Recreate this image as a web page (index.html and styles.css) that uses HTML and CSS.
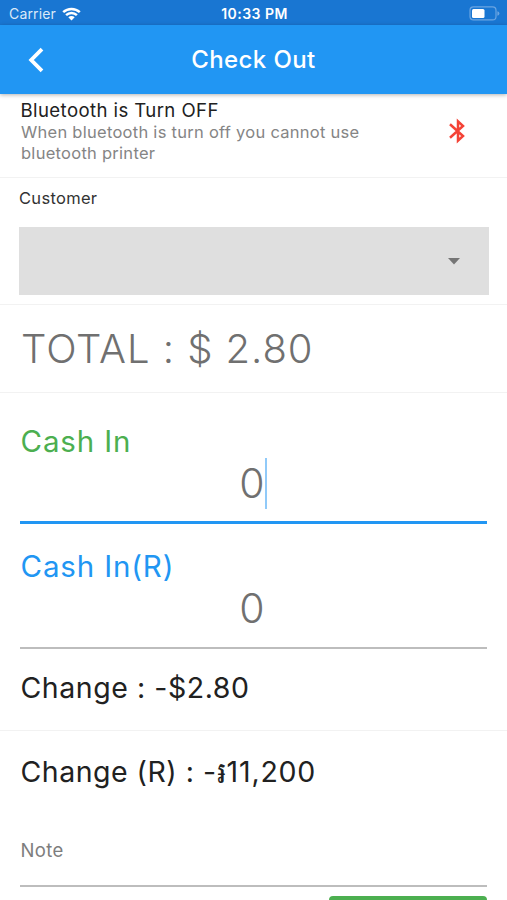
FILE: index.html
```html
<!DOCTYPE html>
<html lang="en">
<head>
<meta charset="utf-8">
<title>Check Out</title>
<link rel="stylesheet" href="styles.css">
</head>
<body>
<div class="status">
  <div class="carrier"><span class="carrier-name">Carrier</span>
    <svg class="wifi" width="19" height="14" viewBox="0 0 19 14" fill="none" stroke="#fff" stroke-width="2.5"><path d="M1.2 5.1C5.8.8 13.2.8 17.8 5.1M4.1 8.2c3-2.9 7.8-2.9 10.8 0"/><path d="M6.3 10.3c1.8-1.7 4.6-1.7 6.4 0L9.5 13.6z" fill="#fff" stroke="none"/></svg>
  </div>
  <span class="time">10:33 PM</span>
  <svg class="battery" width="31" height="15" viewBox="0 0 31 15"><rect x="1" y=".9" width="26" height="13" rx="3.5" fill="none" stroke="#6ba5e2" stroke-width="1.2"/><rect x="3" y="2.9" width="12.5" height="9" rx="1.5" fill="#fff"/><path d="M28.4 5.2q2 .6 2 2.3t-2 2.3z" fill="#6ba5e2"/></svg>
</div>
<header class="appbar">
  <svg class="back" width="17" height="26" viewBox="0 0 17 26" fill="none" stroke="#fff" stroke-width="3.8"><path d="M14 2.2 3.2 13 14 23.8"/></svg>
  <h1 class="heading">Check Out</h1>
</header>
<main>
  <section class="bluetooth">
    <div>
      <div class="bt-title">Bluetooth is Turn OFF</div>
      <div class="bt-text">When bluetooth is turn off you cannot use<br>bluetooth printer</div>
    </div>
    <svg class="bt-icon" width="16" height="26" viewBox="0 0 16 26" fill="none" stroke="#f44336" stroke-width="2.5"><path d="M1 6.3 14 18 9 22.6V3.4L14 8 1 19.7"/></svg>
  </section>
  <section class="customer">
    <label class="customer-label">Customer</label>
    <div class="select"><svg width="12" height="7" viewBox="0 0 12 7"><path d="M0 0h12L6 6.5z" fill="#757575"/></svg></div>
  </section>
  <section class="total"><span class="total-text">TOTAL : $ 2.80</span></section>
  <section class="cash">
    <div class="field focused">
      <div class="field-label green">Cash In</div>
      <div class="value"><span class="digit">0<i class="caret"></i></span></div>
    </div>
    <div class="field">
      <div class="field-label blue">Cash In(R)</div>
      <div class="value"><span class="digit">0</span></div>
    </div>
    <div class="change"><span class="change-text">Change : -$2.80</span></div>
  </section>
  <section class="riel"><span class="riel-text">Change (R) : -</span><span class="riel-sign">៛</span><span class="riel-amount">11,200</span></section>
  <div class="note"><span class="note-text">Note</span></div>
  <div class="button"></div>
</main>
</body>
</html>
```
FILE: styles.css
```css
* { box-sizing: border-box; }
html, body { height: 100%; }
body {
  margin: 0;
  overflow: hidden;
  background: #fff;
  color: #212121;
  font-family: Inter, "Noto Sans", sans-serif;
}
main { font-feature-settings: "calt" 0; }
svg { display: block; flex: none; }
.status {
  display: grid;
  grid-template-columns: 1fr auto 1fr;
  height: 25px;
  padding: 0 7px 0 9px;
  align-items: center;
  background: #1976d2;
  color: #fff;
  font-size: 14px;
  line-height: 27px;
}
.carrier { display: flex; align-items: center; gap: 6px; color: #dbe9f8; }
.carrier-name { letter-spacing: .15px; }
.time { font-size: 14px; font-weight: 600; letter-spacing: .45px; }
.battery { justify-self: end; }
.appbar {
  display: grid;
  grid-template-columns: 60px 1fr 60px;
  align-items: center;
  height: 69px;
  background: #2196f3;
  color: #fff;
  box-shadow: 0 1px 4px rgba(0, 0, 0, .3);
}
.back { margin-left: 28px; }
.heading { margin: 0; text-align: center; font-size: 24px; font-weight: 500; line-height: 31px; letter-spacing: .4px; }
.bluetooth {
  display: flex;
  justify-content: space-between;
  height: 84px;
  padding: 5px 42px 0 21px;
  border-bottom: 1px solid #f2f2f2;
}
.bt-title { font-size: 18.6px; line-height: 23px; letter-spacing: .4px; margin-left: -.5px; }
.bt-text { font-size: 16.5px; line-height: 21px; color: #858585; letter-spacing: .27px; }
.bt-icon { margin-top: 19px; }
.customer { height: 127px; padding: 10px 18px 0 19px; border-bottom: 1px solid #f2f2f2; }
.customer-label { display: block; font-size: 16.5px; line-height: 20px; letter-spacing: .3px; color: #333; }
.select {
  display: flex;
  align-items: center;
  justify-content: flex-end;
  height: 68px;
  margin-top: 19px;
  padding-right: 29px;
  background: #dfdfdf;
}
.total { height: 88px; padding: 0 21px; border-bottom: 1px solid #f2f2f2; font-size: 40px; font-weight: 350; line-height: 88px; letter-spacing: .95px; color: #707070; }
.cash { height: 338px; padding: 28px 20px 0; border-bottom: 1px solid #f2f2f2; }
.field { height: 125px; border-bottom: 2px solid #bdbdbd; }
.focused { height: 103px; border-bottom: 3px solid #2196f3; }
.field:not(.focused) { padding-top: 22px; }
.field-label { font-size: 29.5px; line-height: 40px; letter-spacing: .85px; padding-left: .5px; }
.green { color: #4caf50; }
.blue { color: #2196f3; }
.value { height: 46px; text-align: center; font-size: 41px; font-weight: 350; line-height: 44px; color: #707070; padding-right: 3px; }
.digit { position: relative; }
.caret { position: absolute; left: 100%; top: 0; width: 2px; height: 51px; background: #90caf9; }
.change { font-size: 28.5px; line-height: 78px; letter-spacing: .55px; padding-left: .5px; }
.riel { display: flex; height: 82px; padding-left: 20.5px; font-size: 28.5px; line-height: 82px; letter-spacing: .5px; }
.riel-sign { font-size: 30px; letter-spacing: 0; }
.riel-amount { letter-spacing: .8px; }
.note { height: 74px; margin: 0 20px; border-bottom: 2px solid #bdbdbd; font-size: 18.5px; line-height: 75px; color: #7d7d7d; letter-spacing: .4px; padding-left: .5px; }
.button { width: 158px; height: 4px; margin: 9px 20px 0 auto; border-radius: 4px 4px 0 0; background: #4caf50; }
```
